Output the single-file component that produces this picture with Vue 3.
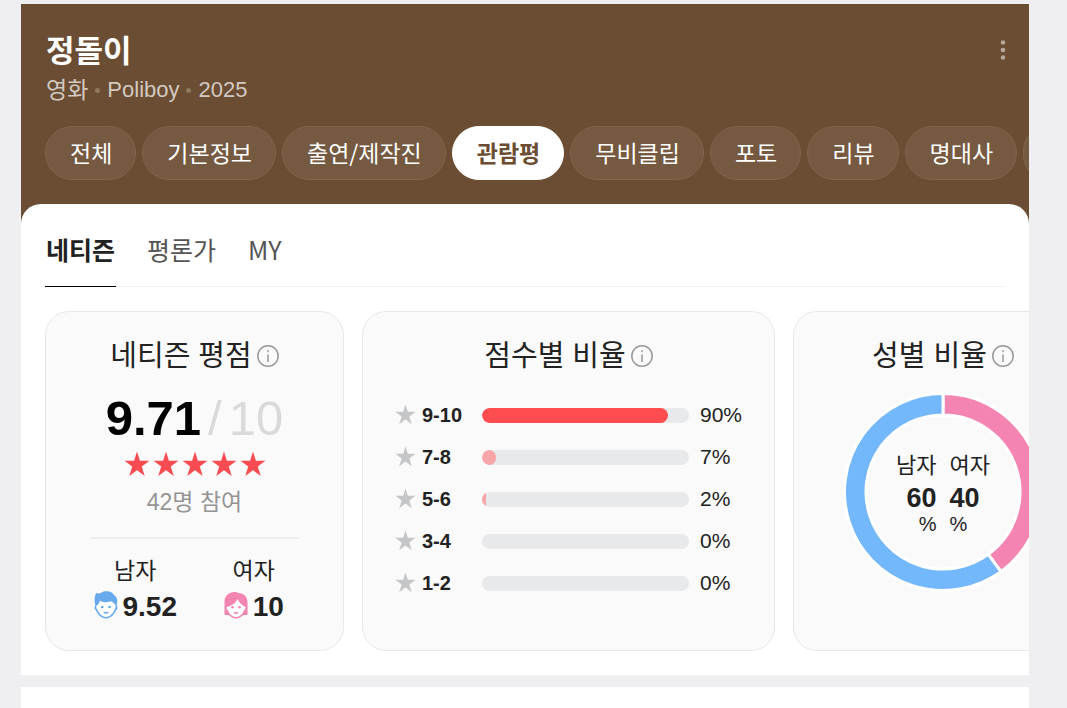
<template>
  <div class="page">
    <header class="header">
      <div class="title-row">
        <h1 class="title">정돌이</h1>
        <button class="more" type="button" aria-label="더보기">
          <svg width="6" height="22" viewBox="0 0 6 22">
            <circle v-for="y in [3.5, 11, 18.5]" :key="y" cx="3" :cy="y" r="2.3" />
          </svg>
        </button>
      </div>
      <div class="sub">
        <span class="sub-kind">영화</span>
        <i class="dot"></i>
        <span>Poliboy</span>
        <i class="dot"></i>
        <span>2025</span>
      </div>
      <nav class="chips">
        <a
          v-for="menu in menus"
          :key="menu"
          href="#"
          class="chip"
          :class="{ active: menu === activeMenu }"
          @click.prevent="activeMenu = menu"
          >{{ menu }}</a
        >
        <a href="#" class="chip" aria-label="더보기" @click.prevent></a>
      </nav>
    </header>

    <main class="panel">
      <div class="tabs">
        <button
          v-for="tab in tabs"
          :key="tab"
          type="button"
          class="tab"
          :class="{ active: tab === activeTab }"
          @click="activeTab = tab"
        >
          {{ tab }}
        </button>
      </div>

      <div class="cards">
        <!-- 네티즌 평점 -->
        <section class="card card-score">
          <h2 class="card-title">
            네티즌 평점
            <svg class="info" viewBox="0 0 22 22">
              <circle cx="11" cy="11" r="10.2" />
              <path d="M11 9.500v7.500M11 5.200v2" />
            </svg>
          </h2>
          <p class="score"><b>9.71</b><span>/</span><span>10</span></p>
          <div class="stars">
            <svg v-for="n in 5" :key="n" viewBox="0 0 26 26">
              <path :d="starPath" />
            </svg>
          </div>
          <p class="joined">42명 참여</p>
          <div class="genders">
            <div class="gender">
              <span class="gender-name">남자</span>
              <span class="gender-value">
                <svg class="face male" viewBox="0 0 24 28">
                  <path
                    class="fill"
                    d="M2.500 2C4.500 2.800 6 2.500 7.500 1.500 10 0 14.500 0 17 1.300 18.500 2 19.500 3 20 4.300 23.500 6 24 10.500 22.600 14 24 16 23.500 18.500 22 19.500 20 24.500 15.500 27.500 12 27.500S4 24.500 2 19.500C.5 18.500 0 16 1.400 14 .3 11 0 5 2.500 2Z"
                  />
                  <path
                    class="skin"
                    d="M5.800 9.500C8.500 11.800 13 11.500 17 10.300 18.500 11.500 20.500 12 21.500 14.500 22 16.500 21 17.800 20.600 18.500 19 23.300 15 26 12 26S5 23.300 3.400 18.500C2.300 17.500 2 16 2.600 14.500 4.500 13.500 5.500 12 5.800 9.500Z"
                  />
                  <circle class="fill" cx="8.200" cy="16" r="1.300" />
                  <circle class="fill" cx="15.500" cy="16" r="1.300" />
                  <path class="mouth" d="M9.700 21Q12 23 14.300 21" />
                </svg>
                <b>9.52</b>
              </span>
            </div>
            <div class="gender">
              <span class="gender-name">여자</span>
              <span class="gender-value">
                <svg class="face female" viewBox="0 0 24 28">
                  <path
                    class="fill"
                    d="M.5 24V10.500C.5 5 5 1 10.500 1 12.500 1 13.500 1.500 14.300 2 20 2 23.500 6 23.500 11V24H19C17 26.200 14.500 27.500 12 27.500S7 26.200 5 24Z"
                  />
                  <path
                    class="skin"
                    d="M13.500 8C15 11.500 18 14.300 21.500 16 21.500 18 20.800 19 19.800 19.500 18.500 23.500 15 26 12 26S5.500 23.500 4.200 19.500C3.200 19 2.500 18 2.500 16 7.500 15 11.800 12 13.500 8Z"
                  />
                  <circle class="fill" cx="8.500" cy="16.300" r="1.300" />
                  <circle class="fill" cx="15.500" cy="16.300" r="1.300" />
                  <path class="mouth" d="M9.700 21.300Q12 23.300 14.300 21.300" />
                </svg>
                <b>10</b>
              </span>
            </div>
          </div>
        </section>

        <!-- 점수별 비율 -->
        <section class="card card-rate">
          <h2 class="card-title">
            점수별 비율
            <svg class="info" viewBox="0 0 22 22">
              <circle cx="11" cy="11" r="10.2" />
              <path d="M11 9.500v7.500M11 5.200v2" />
            </svg>
          </h2>
          <ul class="rates">
            <li v-for="rate in rates" :key="rate.label" class="rate">
              <svg class="rate-star" viewBox="0 0 26 26"><path :d="starPath" /></svg>
              <b class="rate-label">{{ rate.label }}</b>
              <span class="track">
                <span
                  class="bar"
                  :class="{ top: rate.percent === maxPercent }"
                  :style="{ width: rate.percent + '%' }"
                ></span>
              </span>
              <span class="rate-percent">{{ rate.percent }}%</span>
            </li>
          </ul>
        </section>

        <!-- 성별 비율 -->
        <section class="card card-gender">
          <h2 class="card-title">
            성별 비율
            <svg class="info" viewBox="0 0 22 22">
              <circle cx="11" cy="11" r="10.2" />
              <path d="M11 9.500v7.500M11 5.200v2" />
            </svg>
          </h2>
          <div class="donut">
            <svg class="ring" viewBox="0 0 200 200">
              <path class="arc female" :d="arcPath(0, 40)" />
              <path class="arc male" :d="arcPath(40, 100)" />
            </svg>
            <dl class="donut-text">
              <div class="donut-col left">
                <dt>남자</dt>
                <dd><b>60</b><span>%</span></dd>
              </div>
              <div class="donut-col">
                <dt>여자</dt>
                <dd><b>40</b><span>%</span></dd>
              </div>
            </dl>
          </div>
        </section>
      </div>
    </main>

    <section class="next"></section>
  </div>
</template>

<script setup>
import { computed, ref } from "vue";

const menus = [
  "전체",
  "기본정보",
  "출연/제작진",
  "관람평",
  "무비클립",
  "포토",
  "리뷰",
  "명대사",
];
const activeMenu = ref("관람평");

const tabs = ["네티즌", "평론가", "MY"];
const activeTab = ref("네티즌");

const rates = [
  { label: "9-10", percent: 90 },
  { label: "7-8", percent: 7 },
  { label: "5-6", percent: 2 },
  { label: "3-4", percent: 0 },
  { label: "1-2", percent: 0 },
];
const maxPercent = computed(() => Math.max(...rates.map((rate) => rate.percent)));

const starPath =
  "M13 0.500L15.900 9.700H25.500L17.800 15.400L20.700 25L13 19.200L5.300 25L8.200 15.400L0.500 9.700H10.100Z";

// 도넛 차트 조각 (from, to: 퍼센트)
const arcPath = (from, to) => {
  const point = (percent, radius) => {
    const angle = (percent / 100) * Math.PI * 2;
    const x = 100 + radius * Math.sin(angle);
    const y = 100 - radius * Math.cos(angle);
    return `${x.toFixed(2)} ${y.toFixed(2)}`;
  };
  const outer = 98.5;
  const inner = 77;
  const large = to - from > 50 ? 1 : 0;
  return [
    `M${point(from, outer)}`,
    `A${outer} ${outer} 0 ${large} 1 ${point(to, outer)}`,
    `L${point(to, inner)}`,
    `A${inner} ${inner} 0 ${large} 0 ${point(from, inner)}Z`,
  ].join("");
};
</script>

<style>
body {
  background: #efeff1;
}
</style>

<style scoped>
.page {
  box-sizing: border-box;
  display: flex;
  flex-direction: column;
  min-height: 100vh;
  padding: 4px 38px 0 21px;
  color: #222;
  font-family: "Liberation Sans", "Noto Sans CJK KR", sans-serif;
}

h1,
h2,
p,
ul,
dl,
dd {
  margin: 0;
  padding: 0;
}

button {
  padding: 0;
  border: 0;
  background: none;
  font-family: inherit;
  cursor: pointer;
}

/* 상단 */
.header {
  padding: 28px 0 44px;
  background: #6a4d32;
}

.title-row {
  display: flex;
  align-items: center;
  justify-content: space-between;
  padding: 0 23px 0 25px;
}

.title {
  color: #fff;
  font-size: 31px;
  font-weight: 700;
  line-height: 40px;
}

.more {
  padding-bottom: 4px;
}

.more svg {
  display: block;
  fill: #b5a699;
}

.sub {
  display: flex;
  align-items: center;
  gap: 7px;
  padding: 0 25px;
  color: #d2c9c1;
  font-size: 22px;
  line-height: 36px;
}

.sub-kind {
  font-size: 23px;
}

.dot {
  width: 5px;
  height: 5px;
  border-radius: 50%;
  background: #8f7861;
}

.chips {
  display: flex;
  gap: 6px;
  margin-top: 18px;
  padding: 0 24px;
  overflow-x: auto;
  scrollbar-width: none;
}

.chip {
  flex: none;
  padding: 0 23px 2px 24px;
  border: 1px solid #7e654d;
  border-radius: 27px;
  background: #755a41;
  color: #fff;
  font-family: "Noto Sans CJK KR", sans-serif;
  font-size: 23px;
  line-height: 50px;
  text-decoration: none;
}

.chip.active {
  border-color: #fff;
  background: #fff;
  color: #6a4d32;
  font-weight: 700;
}

/* 본문 */
.panel {
  margin-top: -20px;
  padding-bottom: 24px;
  border-radius: 20px 20px 0 0;
  background: #fff;
}

.tabs {
  display: flex;
  gap: 30px;
  margin: 0 24px;
  padding-top: 10px;
  border-bottom: 1px solid #efefef;
}

.tab {
  margin-bottom: -1px;
  padding: 0 1px 2px;
  border-bottom: 1px solid transparent;
  color: #555;
  font-family: "Noto Sans CJK KR", sans-serif;
  font-size: 25px;
  line-height: 70px;
}

.tab.active {
  border-bottom-color: #000;
  color: #222;
  font-weight: 700;
}

.cards {
  display: flex;
  gap: 18px;
  margin-top: 24px;
  padding: 0 24px;
  overflow-x: auto;
  scrollbar-width: none;
}

.card {
  box-sizing: border-box;
  flex: none;
  min-height: 340px;
  padding: 24px 30px 20px;
  border: 1px solid #e8e8e8;
  border-radius: 24px;
  background: #fafafa;
}

.card-title {
  display: flex;
  align-items: center;
  justify-content: center;
  gap: 5px;
  font-size: 29px;
  font-weight: 400;
  line-height: 40px;
}

.info {
  width: 22px;
  height: 22px;
  fill: none;
  stroke: #999;
  stroke-width: 1.5;
}

.card-score {
  width: 299px;
}

.score {
  display: flex;
  justify-content: center;
  gap: 7px;
  margin-top: 17px;
  color: #d9dadb;
  font-size: 49px;
  line-height: 50px;
}

.score b {
  color: #000;
}

.stars {
  display: flex;
  justify-content: center;
  gap: 3px;
  margin-top: 8px;
}

.stars svg {
  width: 26px;
  height: 26px;
  fill: #f94c52;
}

.joined {
  margin-top: 10px;
  color: #949494;
  font-size: 23px;
  line-height: 30px;
  text-align: center;
}

.joined::after {
  content: "";
  display: block;
  height: 2px;
  margin: 20px 14px 0;
  background: #eee;
}

.genders {
  display: grid;
  grid-template-columns: 1fr 1fr;
  margin-top: 17px;
}

.gender {
  display: flex;
  flex-direction: column;
  align-items: center;
}

.gender-name {
  font-size: 23px;
  line-height: 30px;
}

.gender-value {
  display: flex;
  align-items: center;
  gap: 5px;
  font-size: 28px;
  line-height: 42px;
}

.face {
  width: 24px;
  height: 28px;
  margin-bottom: 4px;
}

.face.male {
  color: #66a9ec;
}

.face.female {
  color: #f485b1;
}

.face .fill {
  fill: currentColor;
}

.face .skin {
  fill: #fff;
}

.face .mouth {
  fill: none;
  stroke: currentColor;
  stroke-width: 1.3;
}

/* 점수별 막대 */
.card-rate {
  width: 413px;
}

.rates {
  margin-top: 18px;
  list-style: none;
}

.rate {
  display: flex;
  align-items: center;
  height: 42px;
  padding: 0 1px 0 2px;
  font-size: 21px;
}

.rate-star {
  width: 21px;
  height: 21px;
  margin: 0 6px 2px 0;
  fill: #c5c6c8;
}

.rate-label {
  width: 60px;
  font-size: 20px;
}

.track {
  flex: 1;
  height: 15px;
  border-radius: 8px;
  background: #e8e9eb;
  overflow: hidden;
}

.bar {
  display: block;
  height: 100%;
  border-radius: 8px;
  background: #f8a5a9;
}

.bar.top {
  background: #ff4c4e;
}

.rate-percent {
  width: 43px;
  margin-left: 11px;
}

/* 성별 도넛 */
.card-gender {
  width: 300px;
}

.donut {
  display: grid;
  place-items: center;
  margin-top: 16px;
}

.ring,
.donut-text {
  grid-area: 1 / 1;
}

.ring {
  width: 200px;
  height: 200px;
}

.arc {
  stroke: #fff;
  stroke-width: 3;
}

.arc.male {
  fill: #73b7fc;
}

.arc.female {
  fill: #f484b1;
}

.donut-text {
  display: flex;
  gap: 13px;
}

.donut-col dt {
  font-size: 22px;
  line-height: 34px;
}

.donut-col dd {
  display: flex;
  flex-direction: column;
}

.donut-col.left dd {
  align-items: flex-end;
}

.donut-col b {
  font-size: 27px;
  line-height: 30px;
}

.donut-col span {
  font-size: 20px;
  line-height: 22px;
}

.next {
  flex: 1;
  margin-top: 12px;
  background: #fff;
}
</style>
